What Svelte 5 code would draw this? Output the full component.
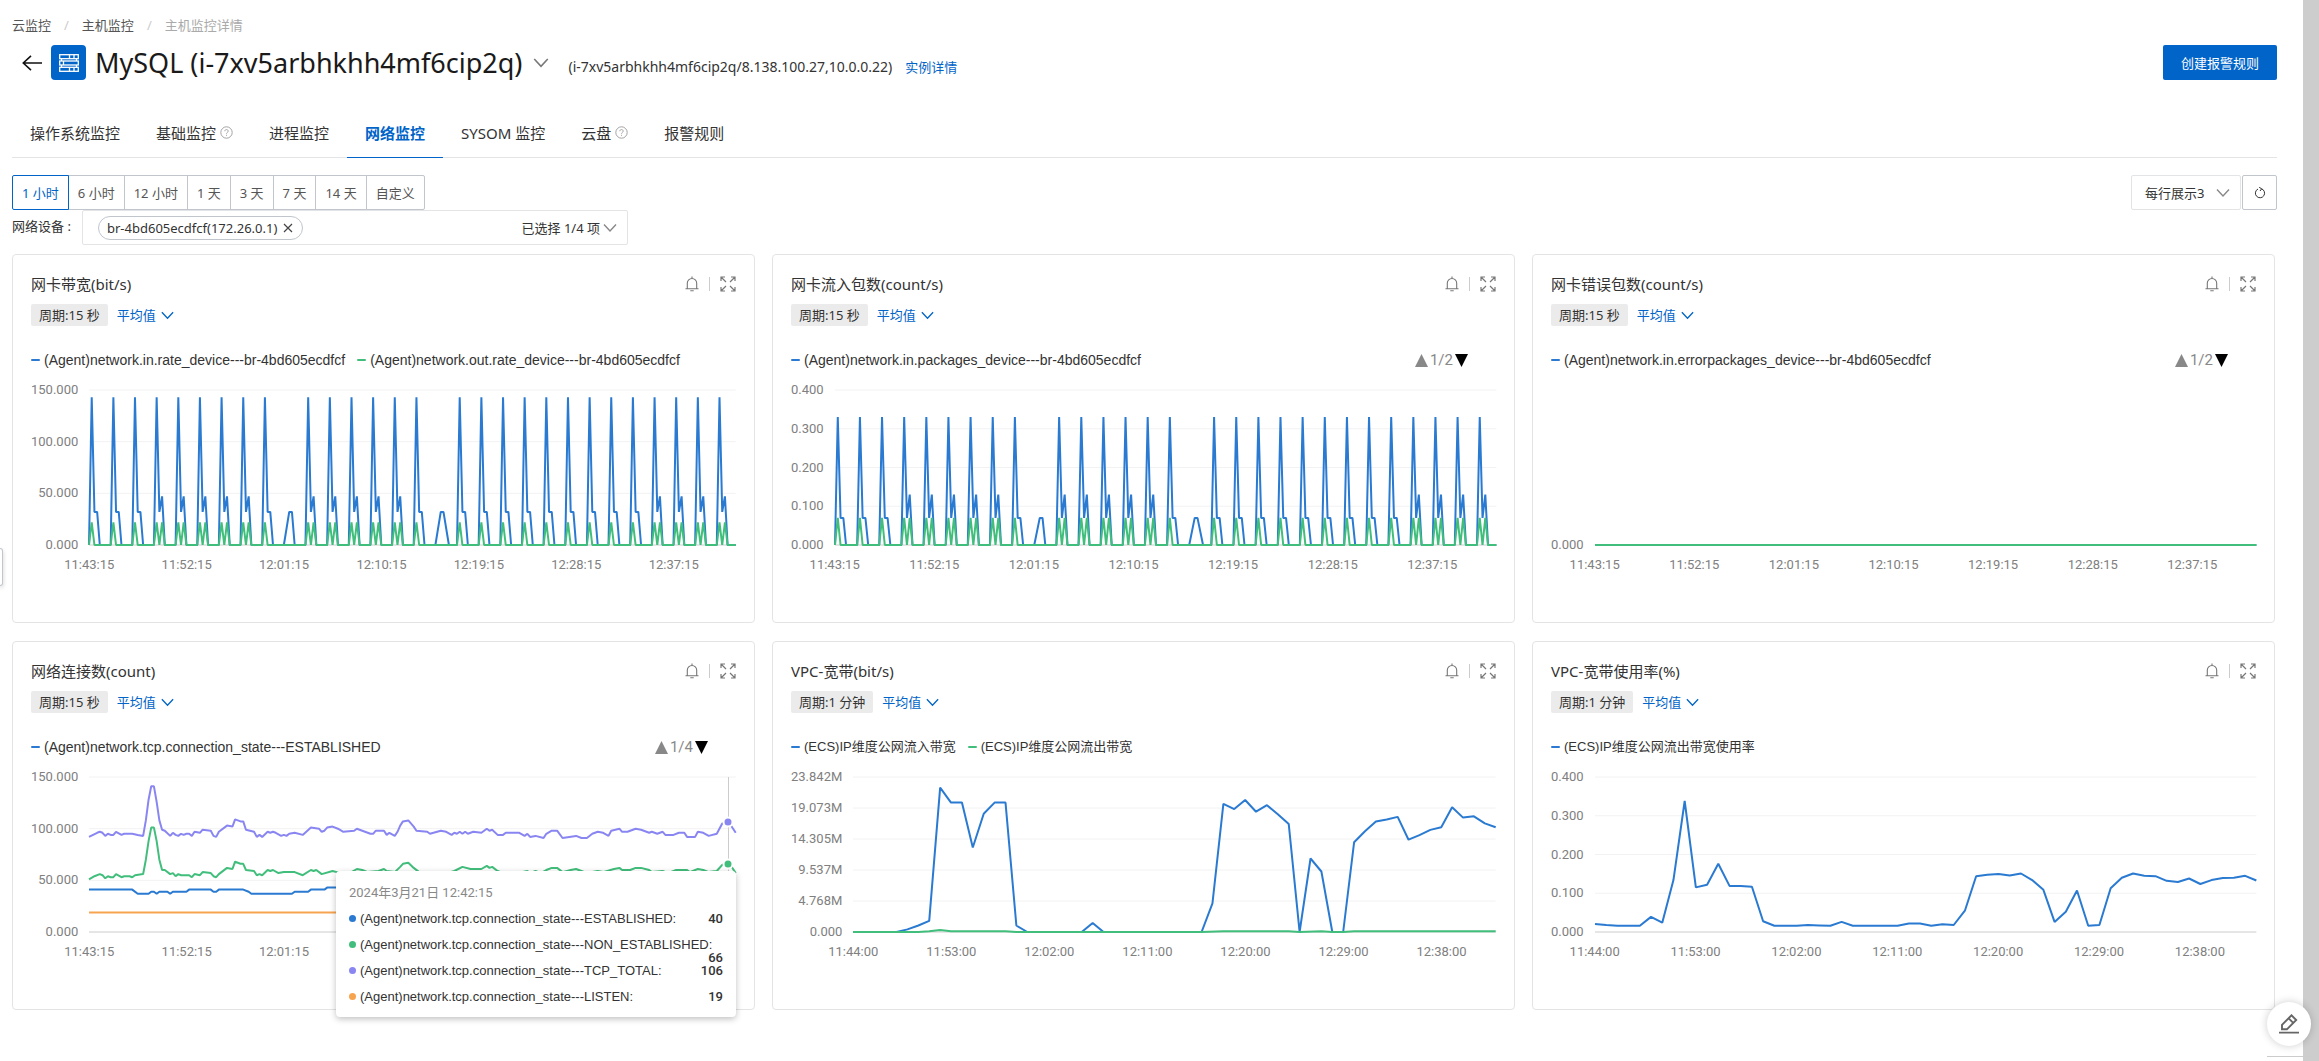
<script>
  const BLUE = '#2a7ad1';
  const GREEN = '#42be7c';
  const PURPLE = '#8986f2';
  const ORANGE = '#f7a450';

  const tabs = [
    { name: '操作系统监控' },
    { name: '基础监控', help: true },
    { name: '进程监控' },
    { name: '网络监控' },
    { name: 'SYSOM 监控' },
    { name: '云盘', help: true },
    { name: '报警规则' }
  ];
  const ranges = ['1 小时', '6 小时', '12 小时', '1 天', '3 天', '7 天', '14 天', '自定义'];

  let activeTab = $state('网络监控');
  let activeRange = $state('1 小时');

  // una muestra cada 15 s: un pico cada 8 muestras
  const single = [1, 9, 17, 65, 121, 137, 145, 153, 161, 169, 177, 185, 193, 201];
  const double = [25, 33, 41, 49, 57, 81, 89, 97, 105, 113, 209, 217, 225, 233];
  const starts = [...single, ...double].sort((a, b) => a - b);

  function inbound(peak, low, second) {
    const points = [[0, 0]];
    for (const s of starts) {
      if (s > 1) points.push([s - 1, 0]);
      points.push([s, peak], [s + 1, low]);
      points.push([s + 2, double.includes(s) ? second : low], [s + 3, 0]);
      if (s === 65) points.push([72, 0], [74, low], [75, low], [76, 0]);
      if (s === 121) points.push([128, 0], [130, low], [131, low], [133, 0]);
    }
    points.push([239, 0]);
    return points;
  }

  function outbound(peak) {
    const points = [[0, 0]];
    for (const s of starts) {
      if (s > 1) points.push([s - 1, 0]);
      points.push([s, peak], [s + 1, 0]);
      if (double.includes(s)) points.push([s + 2, peak], [s + 3, 0]);
    }
    points.push([239, 0]);
    return points;
  }

  const flat = (value) => [[0, value], [239, value]];
  const perMinute = (values) => values.map((v, i) => [i, v]);

  const total = [
    [0, 92], [3, 96], [4, 97], [5, 96], [6, 93], [7, 95], [8, 94], [9, 94], [10, 97], [12, 94],
    [13, 95], [16, 95], [18, 94], [20, 93], [21, 108], [22, 128], [23, 141], [24, 141], [25, 126],
    [26, 108], [27, 99], [28, 98], [30, 93], [31, 96], [32, 94], [33, 93], [34, 95], [35, 94],
    [36, 95], [37, 95], [38, 93], [39, 97], [41, 96], [42, 99], [45, 98], [46, 93], [47, 92],
    [48, 97], [51, 103], [53, 102], [54, 109], [56, 107], [57, 107], [58, 99], [61, 97], [62, 92],
    [63, 94], [64, 92], [66, 97], [67, 96], [68, 97], [69, 96], [71, 93], [72, 94], [73, 93],
    [74, 95], [76, 96], [79, 94], [82, 101], [85, 100], [86, 97], [87, 98], [88, 101], [90, 102],
    [92, 100], [94, 97], [98, 98], [99, 100], [104, 95], [105, 95], [106, 98], [109, 98],
    [110, 94], [111, 96], [113, 93], [114, 97], [115, 103], [116, 107], [118, 108], [120, 102],
    [121, 98], [125, 97], [126, 95], [130, 98], [132, 97], [134, 94], [135, 96], [136, 95],
    [137, 97], [138, 95], [139, 97], [140, 95], [142, 97], [145, 96], [147, 100], [148, 98],
    [149, 99], [151, 94], [153, 94], [154, 96], [159, 96], [161, 93], [162, 95], [163, 92],
    [165, 93], [168, 91], [169, 95], [171, 98], [173, 98], [175, 91], [180, 93], [182, 91],
    [184, 91], [186, 95], [188, 97], [190, 96], [192, 93], [193, 98], [196, 100], [197, 97],
    [199, 97], [202, 100], [204, 99], [207, 96], [208, 97], [210, 95], [212, 97], [213, 94],
    [216, 94], [218, 96], [220, 96], [221, 92], [224, 92], [225, 97], [227, 96], [229, 93],
    [232, 95], [234, 105], [236, 106], [237, 104], [239, 96]
  ];

  const nonEstablished = [
    [0, 51], [2, 54], [4, 56], [5, 55], [6, 52], [7, 54], [8, 53], [9, 53], [10, 56], [12, 53],
    [13, 54], [15, 54], [16, 53], [17, 55], [20, 56], [21, 70], [22, 88], [23, 101], [24, 101],
    [25, 88], [26, 70], [27, 60], [28, 60], [30, 56], [31, 57], [32, 54], [33, 56], [34, 55],
    [37, 55], [38, 53], [39, 56], [41, 55], [42, 58], [45, 57], [46, 54], [47, 53], [48, 56],
    [51, 62], [53, 61], [54, 68], [56, 66], [57, 66], [58, 60], [61, 59], [62, 55], [63, 56],
    [64, 55], [66, 60], [67, 59], [68, 60], [70, 57], [72, 58], [76, 58], [79, 55], [82, 60],
    [83, 59], [84, 60], [86, 56], [90, 59], [93, 57], [97, 58], [99, 61], [101, 60], [103, 58],
    [107, 59], [109, 61], [110, 59], [113, 58], [115, 63], [116, 66], [118, 67], [120, 62],
    [122, 58], [130, 55], [135, 59], [138, 63], [141, 61], [145, 61], [147, 64], [148, 62],
    [149, 63], [151, 59], [155, 55], [162, 59], [163, 57], [165, 59], [167, 57], [169, 60],
    [171, 62], [173, 62], [175, 58], [178, 60], [180, 61], [182, 59], [184, 57], [188, 59],
    [190, 58], [194, 61], [196, 62], [197, 60], [200, 60], [202, 62], [204, 62], [207, 60],
    [208, 58], [212, 59], [214, 57], [217, 60], [221, 60], [222, 58], [225, 61], [227, 60],
    [229, 58], [232, 59], [234, 65], [236, 66], [237, 65], [239, 57]
  ];

  const established = [
    [0, 41], [16, 41], [18, 37], [22, 37], [23, 39], [24, 39], [25, 37], [26, 39], [29, 39],
    [30, 37], [31, 39], [36, 39], [37, 41], [45, 41], [46, 39], [47, 39], [48, 41], [57, 41],
    [59, 39], [60, 37], [75, 37], [76, 39], [81, 39], [82, 41], [87, 41], [88, 43], [95, 43],
    [100, 40], [239, 40]
  ];

  const vpcIn = perMinute([
    0, 0, 0, 0, 0, 0.4, 1, 1.7, 22.2, 19.9, 19.9, 13, 18.2, 19.9, 19.9, 1, 0, 0, 0, 0, 0, 0, 1.4,
    0, 0, 0, 0, 0, 0, 0, 0, 0, 0, 4.4, 19.7, 18.9, 20.3, 18.5, 19.5, 18.1, 16.6, 0, 11.3, 9.3, 0,
    0, 13.8, 15.5, 17, 17.3, 17.7, 14.2, 14.9, 15.7, 16.1, 19.2, 17.6, 17.8, 16.7, 16.1
  ]);

  const vpcOut = [
    [0, 0], [6, 0], [7, 0.1], [8, 0.3], [9, 0.1], [14, 0.1], [15, 0], [32, 0], [34, 0.1],
    [40, 0.1], [41, 0], [43, 0.1], [44, 0], [45, 0], [46, 0.1], [59, 0.1]
  ];

  const vpcUsage = perMinute([
    0.021, 0.018, 0.016, 0.016, 0.016, 0.039, 0.024, 0.134, 0.338, 0.115, 0.122, 0.176, 0.119,
    0.119, 0.117, 0.028, 0.016, 0.016, 0.016, 0.018, 0.017, 0.016, 0.026, 0.016, 0.016, 0.016,
    0.016, 0.016, 0.022, 0.022, 0.016, 0.02, 0.018, 0.055, 0.144, 0.148, 0.15, 0.146, 0.151,
    0.134, 0.109, 0.026, 0.052, 0.107, 0.016, 0.018, 0.113, 0.14, 0.151, 0.145, 0.144, 0.132,
    0.129, 0.138, 0.124, 0.134, 0.139, 0.14, 0.145, 0.133
  ]);

  const quarterTicks = ['11:43:15', '11:52:15', '12:01:15', '12:10:15', '12:19:15', '12:28:15', '12:37:15'];
  const minuteTicks = ['11:44:00', '11:53:00', '12:02:00', '12:11:00', '12:20:00', '12:29:00', '12:38:00'];

  const charts = [
    {
      title: '网卡带宽(bit/s)',
      period: '15 秒',
      legend: [
        { name: '(Agent)network.in.rate_device---br-4bd605ecdfcf', color: BLUE },
        { name: '(Agent)network.out.rate_device---br-4bd605ecdfcf', color: GREEN }
      ],
      yTicks: ['150.000', '100.000', '50.000', '0.000'],
      xTicks: quarterTicks,
      max: 150,
      last: 239,
      step: 36,
      series: [
        { color: BLUE, points: inbound(143, 32, 47) },
        { color: GREEN, points: outbound(22) }
      ]
    },
    {
      title: '网卡流入包数(count/s)',
      period: '15 秒',
      legend: [{ name: '(Agent)network.in.packages_device---br-4bd605ecdfcf', color: BLUE }],
      page: '1/2',
      yTicks: ['0.400', '0.300', '0.200', '0.100', '0.000'],
      xTicks: quarterTicks,
      max: 0.4,
      last: 239,
      step: 36,
      series: [
        { color: BLUE, points: inbound(0.33, 0.07, 0.13) },
        { color: GREEN, points: outbound(0.07) }
      ]
    },
    {
      title: '网卡错误包数(count/s)',
      period: '15 秒',
      legend: [{ name: '(Agent)network.in.errorpackages_device---br-4bd605ecdfcf', color: BLUE }],
      page: '1/2',
      yTicks: ['0.000'],
      xTicks: quarterTicks,
      max: 1,
      last: 239,
      step: 36,
      series: [
        { color: BLUE, points: flat(0) },
        { color: GREEN, points: flat(0) }
      ]
    },
    {
      title: '网络连接数(count)',
      period: '15 秒',
      legend: [{ name: '(Agent)network.tcp.connection_state---ESTABLISHED', color: BLUE }],
      page: '1/4',
      yTicks: ['150.000', '100.000', '50.000', '0.000'],
      // el tooltip tapa el resto del eje
      xTicks: quarterTicks.slice(0, 3),
      max: 150,
      last: 239,
      step: 36,
      series: [
        { color: BLUE, points: established },
        { color: ORANGE, points: flat(19) },
        { color: GREEN, points: nonEstablished },
        { color: PURPLE, points: total }
      ],
      hover: {
        index: 236,
        time: '2024年3月21日 12:42:15',
        markers: [
          { value: 106, color: PURPLE },
          { value: 66, color: GREEN }
        ],
        rows: [
          { name: '(Agent)network.tcp.connection_state---ESTABLISHED:', value: 40, color: BLUE },
          { name: '(Agent)network.tcp.connection_state---NON_ESTABLISHED:', value: 66, color: GREEN },
          { name: '(Agent)network.tcp.connection_state---TCP_TOTAL:', value: 106, color: PURPLE },
          { name: '(Agent)network.tcp.connection_state---LISTEN:', value: 19, color: ORANGE }
        ]
      }
    },
    {
      title: 'VPC-宽带(bit/s)',
      period: '1 分钟',
      legend: [
        { name: '(ECS)IP维度公网流入带宽', color: BLUE },
        { name: '(ECS)IP维度公网流出带宽', color: GREEN }
      ],
      yTicks: ['23.842M', '19.073M', '14.305M', '9.537M', '4.768M', '0.000'],
      xTicks: minuteTicks,
      max: 23.842,
      last: 59,
      step: 9,
      series: [
        { color: BLUE, points: vpcIn },
        { color: GREEN, points: vpcOut }
      ]
    },
    {
      title: 'VPC-宽带使用率(%)',
      period: '1 分钟',
      legend: [{ name: '(ECS)IP维度公网流出带宽使用率', color: BLUE }],
      yTicks: ['0.400', '0.300', '0.200', '0.100', '0.000'],
      xTicks: minuteTicks,
      max: 0.4,
      last: 59,
      step: 9,
      series: [{ color: BLUE, points: vpcUsage }]
    }
  ];

  const HEIGHT = 155;

  function toPoints(points, chart) {
    return points
      .map(([i, v]) => `${((i / chart.last) * 1000).toFixed(1)},${(HEIGHT - (v / chart.max) * HEIGHT).toFixed(1)}`)
      .join(' ');
  }

  const gridY = (i, count) => (count === 1 ? HEIGHT : (i / (count - 1)) * HEIGHT);
</script>

{#snippet chevron(size)}
  <svg class="chevron" width={size} height={size} viewBox="0 0 16 16" aria-hidden="true">
    <path d="M2 4.500 8 11l6-6.500" fill="none" stroke="currentColor" stroke-width="1.400" />
  </svg>
{/snippet}

{#snippet helpIcon()}
  <svg width="13" height="13" viewBox="0 0 13 13" fill="none" stroke="#999" aria-hidden="true">
    <circle cx="6.500" cy="6.500" r="5.700" stroke-width="0.900" />
    <path d="M4.800 5.200c0-2.200 3.400-2.200 3.400 0 0 1.200-1.700 1.200-1.700 2.500M6.500 8.800v1" stroke-width="0.900" />
  </svg>
{/snippet}

<div class="layout">
  <main>
    <nav class="breadcrumb" aria-label="breadcrumb">
      <a href="#monitor">云监控</a>
      <span class="slash">/</span>
      <a href="#hosts">主机监控</a>
      <span class="slash">/</span>
      <span class="current">主机监控详情</span>
    </nav>

    <header>
      <button class="plain back" aria-label="返回">
        <svg width="20" height="18" viewBox="0 0 20 18" fill="none" stroke="#111" stroke-width="1.600">
          <path d="M20 9H1.500M9 1.800 1.300 9 9 16.200" />
        </svg>
      </button>
      <span class="logo">
        <svg width="20" height="18" viewBox="0 0 20 18" fill="none" stroke="#fff" stroke-width="1.300">
          <rect x=".7" y=".7" width="18.600" height="4" />
          <rect x=".7" y="7" width="18.600" height="4" />
          <rect x=".7" y="13.300" width="18.600" height="4" />
          <path d="M10.500 1v3.500M15 1v3.500M4.500 7v4M10.500 13.500V17M15 13.500V17M2.500 4.700V7M17.500 4.700V7M2.500 11v2.300M17.500 11v2.300" />
        </svg>
      </span>
      <h1>MySQL (i-7xv5arbhkhh4mf6cip2q)</h1>
      <button class="plain switch" aria-label="切换实例">{@render chevron(18)}</button>
      <p class="address">(i-7xv5arbhkhh4mf6cip2q/8.138.100.27,10.0.0.22)</p>
      <a class="detail" href="#instance">实例详情</a>
      <button class="primary">创建报警规则</button>
    </header>

    <div class="tabs" role="tablist">
      {#each tabs as tab}
        <button
          role="tab"
          class="tab"
          class:active={tab.name === activeTab}
          aria-selected={tab.name === activeTab}
          onclick={() => (activeTab = tab.name)}
        >
          {tab.name}
          {#if tab.help}{@render helpIcon()}{/if}
        </button>
      {/each}
    </div>

    <div class="toolbar">
      <div class="ranges">
        {#each ranges as range}
          <button class:active={range === activeRange} onclick={() => (activeRange = range)}>{range}</button>
        {/each}
      </div>
      <div class="view">
        <div class="per-row">
          <select aria-label="每行展示">
            <option>每行展示3</option>
          </select>
          {@render chevron(16)}
        </div>
        <button class="refresh" aria-label="刷新">
          <svg width="12" height="12" viewBox="0 0 12 12" fill="none" stroke="#333" stroke-width="1">
            <path d="M7.500 1.800a4.600 4.600 0 1 1-3.500.2M5.200.3l2.500 1.500-1.700 2.200" />
          </svg>
        </button>
      </div>
    </div>

    <div class="device">
      <span class="device-label">网络设备 :</span>
      <div class="device-box">
        <span class="chip">
          br-4bd605ecdfcf(172.26.0.1)
          <button class="plain" aria-label="移除">
            <svg width="10" height="10" viewBox="0 0 10 10" stroke="#444" stroke-width="1.200">
              <path d="m1 1 8 8M9 1 1 9" />
            </svg>
          </button>
        </span>
        <button class="plain selected">已选择 1/4 项 {@render chevron(16)}</button>
      </div>
    </div>

    <div class="cards">
      {#each charts as chart}
        <section class="card">
          <div class="card-head">
            <h2>{chart.title}</h2>
            <button class="plain" aria-label="报警">
              <svg width="14" height="16" viewBox="0 0 14 16" fill="none" stroke="#777" stroke-width="1.100">
                <path d="M.5 12.800h13M2.300 12.600V7.200a4.700 4.700 0 0 1 9.400 0v5.400M7 .5v2M5.300 14.700h3.400" />
              </svg>
            </button>
            <span class="divider"></span>
            <button class="plain" aria-label="放大">
              <svg width="16" height="16" viewBox="0 0 16 16" fill="none" stroke="#777" stroke-width="1.200">
                <path d="M1 5V1h4M1 1l5 5M11 1h4v4M15 1l-5 5M1 11v4h4M1 15l5-5M15 11v4h-4M15 15l-5-5" />
              </svg>
            </button>
          </div>

          <div class="card-sub">
            <span class="period">周期:{chart.period}</span>
            <label class="stat">
              <select aria-label="统计方式">
                <option>平均值</option>
              </select>
              {@render chevron(15)}
            </label>
          </div>

          <div class="legend">
            {#each chart.legend as item}
              <span class="legend-item" class:agent={item.name.startsWith('(Agent)')}>
                <i style="background: {item.color}"></i>{item.name}
              </span>
            {/each}
            {#if chart.page}
              <div class="pager">
                <button class="plain" aria-label="上一页">
                  <svg width="13" height="13" viewBox="0 0 13 13"><path d="M6.500 0 13 13H0z" fill="#888" /></svg>
                </button>
                <span>{chart.page}</span>
                <button class="plain" aria-label="下一页">
                  <svg width="13" height="13" viewBox="0 0 13 13"><path d="M0 0h13L6.500 13z" fill="#000" /></svg>
                </button>
              </div>
            {/if}
          </div>

          <div class="chart">
            <div class="y-axis" class:one={chart.yTicks.length === 1}>
              {#each chart.yTicks as tick}
                <span>{tick}</span>
              {/each}
            </div>
            <div class="plot">
              <svg class="lines" viewBox="0 0 1000 {HEIGHT}" preserveAspectRatio="none" aria-hidden="true">
                {#each chart.yTicks as tick, i}
                  {@const y = gridY(i, chart.yTicks.length)}
                  <line class="grid" class:base={i === chart.yTicks.length - 1} x1="0" x2="1000" y1={y} y2={y} />
                {/each}
                {#each chart.series as line}
                  <polyline points={toPoints(line.points, chart)} stroke={line.color} />
                {/each}
              </svg>
              {#if chart.hover}
                <span class="cursor" style="left: {(chart.hover.index / chart.last) * 100}%"></span>
                {#each chart.hover.markers as marker}
                  <span
                    class="marker"
                    style="left: {(chart.hover.index / chart.last) * 100}%; bottom: {(marker.value / chart.max) * 100}%; background: {marker.color}"
                  ></span>
                {/each}
                <div class="tooltip" role="tooltip">
                  <p>{chart.hover.time}</p>
                  <ul>
                    {#each chart.hover.rows as row}
                      <li>
                        <i style="background: {row.color}"></i>
                        <span>{row.name}</span>
                        <b>{row.value}</b>
                      </li>
                    {/each}
                  </ul>
                </div>
              {/if}
            </div>
            <div class="x-axis">
              <div class="x-ticks" style="margin-left: {(-50 * chart.step) / chart.last}%">
                {#each chart.xTicks as tick}
                  <span style="width: {(100 * chart.step) / chart.last}%">{tick}</span>
                {/each}
              </div>
            </div>
          </div>
        </section>
      {/each}
    </div>
  </main>
  <div class="scroll-track"></div>
</div>

<button class="drawer-handle" aria-label="展开侧栏"></button>
<button class="feedback" aria-label="反馈">
  <svg width="20" height="20" viewBox="0 0 20 20" fill="none" stroke="#666" stroke-width="1.900">
    <path d="M0 18.600h20M3 15.300v-4.500l9.500-9.500 4.700 4.700-9.300 9.300zM9.700 4.300l4.500 4.500" />
  </svg>
</button>
<span class="feedback-line"></span>

<style>
  :global(body) {
    background: #fff;
    color: #333;
    font-family: 'Noto Sans', 'Noto Sans CJK SC', sans-serif;
    font-size: 13px;
    line-height: 20px;
  }

  button,
  select {
    font: inherit;
    color: inherit;
    cursor: pointer;
  }

  h1,
  h2,
  p,
  ul {
    margin: 0;
    padding: 0;
    font-weight: 400;
    list-style: none;
  }

  a {
    color: #0064c8;
    text-decoration: none;
  }

  svg {
    display: block;
    flex: none;
  }

  .plain {
    display: flex;
    align-items: center;
    padding: 0;
    border: none;
    background: none;
  }

  .layout {
    display: flex;
    min-height: 100vh;
  }

  main {
    flex: 1;
    min-width: 0;
    padding: 15px 26px 32px 12px;
  }

  .scroll-track {
    width: 16px;
    background: #cdcdcd;
  }

  .breadcrumb {
    display: flex;
    gap: 13px;
    margin-bottom: 10px;
  }

  .breadcrumb a {
    color: #555;
  }

  .slash {
    color: #ccc;
  }

  .current {
    color: #aaa;
  }

  header {
    display: flex;
    align-items: center;
    height: 35px;
    margin-bottom: 30px;
  }

  .back {
    margin: 0 9px 0 10px;
  }

  .logo {
    display: flex;
    align-items: center;
    justify-content: center;
    width: 35px;
    height: 35px;
    border-radius: 4px;
    background: #0064c8;
  }

  h1 {
    margin: 0 10px 0 9px;
    color: #1a1a1a;
    font-size: 27px;
    line-height: 35px;
  }

  .switch {
    color: #777;
  }

  .address {
    margin: 8px 13px 0 18px;
    font-size: 14px;
  }

  .detail {
    margin-top: 8px;
  }

  .primary {
    height: 35px;
    margin-left: auto;
    padding: 0 18px;
    border: none;
    border-radius: 2px;
    background: #0064c8;
    color: #fff;
  }

  .tabs {
    display: flex;
    border-bottom: 1px solid #e3e4e6;
  }

  .tab {
    display: flex;
    align-items: center;
    gap: 4px;
    height: 48px;
    margin-bottom: -1px;
    padding: 0 18px 2px;
    border: none;
    border-bottom: 1px solid transparent;
    background: none;
    font-size: 15px;
  }

  .tab.active {
    border-bottom-color: #0064c8;
    color: #0064c8;
    font-weight: 700;
  }

  .toolbar {
    display: flex;
    justify-content: space-between;
    margin-top: 17px;
  }

  .ranges {
    display: flex;
  }

  .ranges button {
    height: 35px;
    margin-right: -1px;
    padding: 0 9px;
    border: 1px solid #c0c6cc;
    background: #fff;
    color: #555;
  }

  .ranges button:first-child {
    border-radius: 2px 0 0 2px;
  }

  .ranges button:last-child {
    margin-right: 0;
    border-radius: 0 2px 2px 0;
  }

  .ranges button.active {
    position: relative;
    border-color: #0064c8;
    color: #0064c8;
  }

  .view {
    display: flex;
    gap: 1px;
  }

  .per-row {
    display: flex;
    align-items: center;
    gap: 10px;
    height: 33px;
    padding: 0 9px 0 13px;
    border: 1px solid #e3e4e6;
    border-radius: 2px;
    color: #333;
  }

  .per-row .chevron {
    color: #888;
  }

  select {
    padding: 0;
    border: none;
    background: none;
    appearance: none;
  }

  .refresh {
    display: flex;
    align-items: center;
    justify-content: center;
    width: 35px;
    height: 35px;
    padding: 0;
    border: 1px solid #c0c6cc;
    border-radius: 2px;
    background: #fff;
  }

  .device {
    display: flex;
  }

  .device-label {
    width: 70px;
    margin-top: 6px;
  }

  .device-box {
    display: flex;
    align-items: center;
    justify-content: space-between;
    box-sizing: border-box;
    width: 546px;
    height: 35px;
    padding: 0 9px 0 15px;
    border: 1px solid #e3e4e6;
    border-radius: 2px;
  }

  .chip {
    display: flex;
    align-items: center;
    gap: 6px;
    padding: 0 9px 0 8px;
    border: 1px solid #c0c6cc;
    border-radius: 12px;
    line-height: 22px;
  }

  .selected {
    gap: 2px;
  }

  .selected .chevron {
    color: #888;
  }

  .cards {
    display: grid;
    grid-template-columns: repeat(3, minmax(0, 1fr));
    gap: 18px 17px;
    margin: 9px 2px 0 0;
  }

  .card {
    padding: 18px 18px 47px;
    border: 1px solid #e3e4e6;
    border-radius: 4px;
  }

  .card-head {
    display: flex;
    align-items: center;
    height: 22px;
  }

  h2 {
    flex: 1;
    font-size: 15px;
    line-height: 22px;
  }

  .divider {
    width: 1px;
    height: 14px;
    margin: 0 10px;
    background: #ccc;
  }

  .card-sub {
    display: flex;
    align-items: center;
    gap: 9px;
    margin-top: 9px;
  }

  .period {
    padding: 0 8px;
    border-radius: 2px;
    background: #ebebeb;
    line-height: 22px;
  }

  .stat {
    display: flex;
    align-items: center;
    gap: 3px;
    color: #0064c8;
  }

  .legend {
    display: flex;
    gap: 12px;
    margin-top: 24px;
    font-family: 'Liberation Sans', 'Noto Sans CJK SC', sans-serif;
  }

  .legend-item {
    display: flex;
    align-items: center;
    gap: 4px;
    white-space: nowrap;
  }

  .legend-item.agent {
    font-size: 14px;
  }

  .legend-item i {
    width: 9px;
    height: 2px;
    border-radius: 1px;
  }

  .pager {
    display: flex;
    align-items: center;
    gap: 2px;
    margin: 0 28px 0 auto;
    color: #888;
    font-family: Roboto, sans-serif;
    font-size: 15px;
  }

  .chart {
    display: grid;
    grid-template-columns: auto minmax(0, 1fr);
    column-gap: 11px;
    margin-top: 20px;
    color: #808080;
    font-family: Roboto, 'Noto Sans CJK SC', sans-serif;
  }

  .y-axis {
    display: flex;
    flex-direction: column;
    justify-content: space-between;
    margin: -10px 0;
    text-align: right;
  }

  .y-axis.one {
    justify-content: flex-end;
  }

  .plot {
    position: relative;
    height: 155px;
  }

  .lines {
    width: 100%;
    height: 100%;
    overflow: visible;
  }

  .lines polyline {
    fill: none;
    stroke-width: 2;
    stroke-linejoin: bevel;
    vector-effect: non-scaling-stroke;
  }

  .grid {
    stroke: #f2f2f2;
    vector-effect: non-scaling-stroke;
  }

  .grid.base {
    stroke: #ccc;
  }

  .x-axis {
    grid-column: 2;
    margin-top: 10px;
  }

  .x-ticks {
    display: flex;
    width: 100%;
    white-space: nowrap;
  }

  .x-ticks span {
    flex: none;
    text-align: center;
  }

  .cursor {
    position: absolute;
    top: 0;
    bottom: 0;
    width: 1px;
    background: #ccc;
  }

  .marker {
    position: absolute;
    width: 7px;
    height: 7px;
    border: 2px solid #fff;
    border-radius: 50%;
    transform: translate(-50%, 50%);
  }

  .tooltip {
    position: absolute;
    top: 94px;
    right: 0;
    box-sizing: border-box;
    width: 400px;
    padding: 12px 13px 1px;
    border-radius: 4px;
    background: #fff;
    box-shadow: 0 2px 6px rgba(0, 0, 0, 0.25);
    color: #333;
  }

  .tooltip ul {
    margin-top: 9px;
  }

  .tooltip li {
    display: flex;
    flex-wrap: wrap;
    align-items: center;
    align-content: flex-start;
    height: 26px;
    font-family: 'Liberation Sans', sans-serif;
    line-height: 13px;
  }

  .tooltip li i {
    width: 7px;
    height: 7px;
    margin-right: 4px;
    border-radius: 50%;
  }

  .tooltip b {
    margin-left: auto;
    font-family: Roboto, sans-serif;
    font-weight: 500;
  }

  .tooltip p {
    color: #888;
  }

  .drawer-handle {
    position: fixed;
    top: 548px;
    left: 0;
    width: 3px;
    height: 38px;
    padding: 0;
    border: 1px solid #c0c6cc;
    border-left: none;
    border-radius: 0 3px 3px 0;
    background: #fff;
    box-shadow: 0 2px 4px rgba(0, 0, 0, 0.2);
  }

  .feedback {
    position: fixed;
    right: 8px;
    bottom: 15px;
    display: flex;
    align-items: center;
    justify-content: center;
    width: 44px;
    height: 44px;
    padding: 0;
    border: none;
    border-radius: 50%;
    background: #fff;
    box-shadow: 0 0 8px rgba(0, 0, 0, 0.2);
  }

  .feedback-line {
    position: fixed;
    right: 8px;
    bottom: 4px;
    width: 44px;
    height: 1px;
    background: #ccc;
  }
</style>
